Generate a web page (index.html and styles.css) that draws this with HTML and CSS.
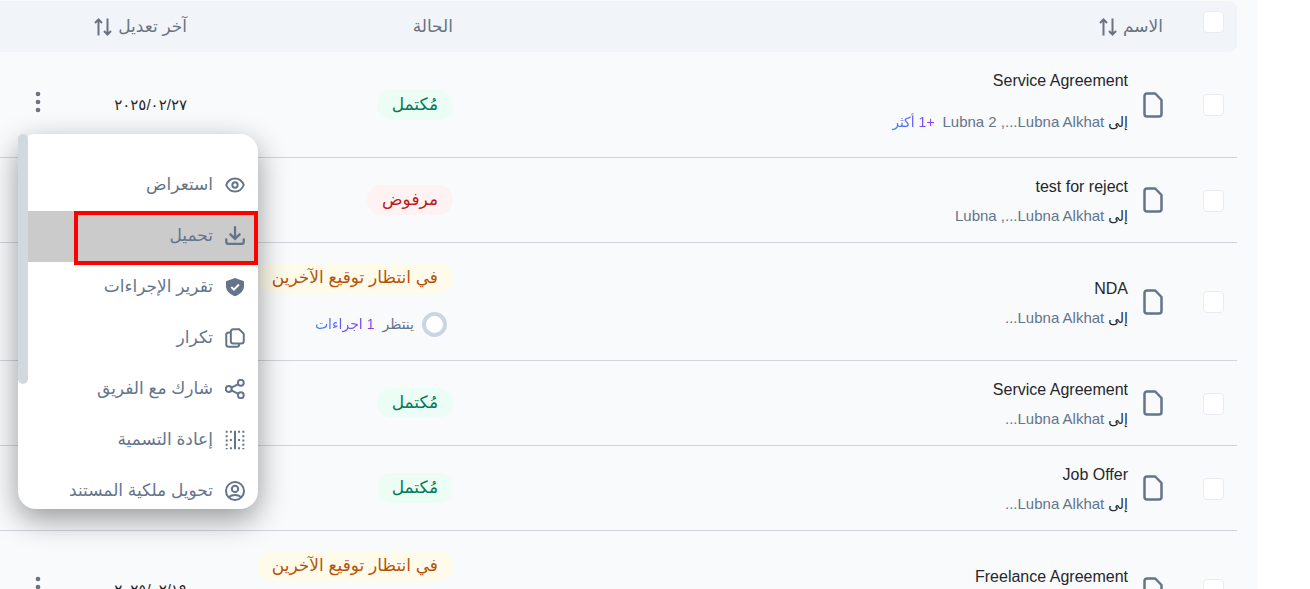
FILE: index.html
```html
<!DOCTYPE html>
<html lang="ar" dir="rtl">

<head>
    <meta charset="UTF-8">
    <meta name="viewport" content="width=device-width, initial-scale=1.0">
    <title>المستندات</title>
    <link rel="stylesheet" href="styles.css">
</head>

<body>
    <!-- shared icons -->
    <svg class="sprite" aria-hidden="true">
        <symbol id="doc" viewBox="0 0 20 26">
            <path d="M4 1.500h8.200L18.500 8v14a2.500 2.500 0 0 1-2.500 2.500H4A2.500 2.500 0 0 1 1.500 22V4A2.500 2.500 0 0 1 4 1.500z" fill="none" stroke="#64748b" stroke-width="2.500" stroke-linejoin="round" />
        </symbol>
        <symbol id="sort" viewBox="0 0 18 18">
            <path d="M4.500 17.500V1.500M1 5l3.500-3.500L8 5M13.500 .5v16M10 13l3.500 3.500L17 13" fill="none" stroke="#6b7280" stroke-width="2" />
        </symbol>
        <symbol id="dots" viewBox="0 0 24 24">
            <g fill="#6b7280">
                <circle cx="12" cy="4" r="2.300" />
                <circle cx="12" cy="12" r="2.300" />
                <circle cx="12" cy="20" r="2.300" />
            </g>
        </symbol>
    </svg>

    <div class="panel">
        <table class="table">
            <thead>
                <tr>
                    <th class="col-check"><input type="checkbox" class="check" aria-label="تحديد الكل"></th>
                    <th class="col-name"><button class="sort">الاسم <svg class="sort-icon"><use href="#sort" /></svg></button></th>
                    <th class="col-status">الحالة</th>
                    <th class="col-date"><button class="sort">آخر تعديل <svg class="sort-icon"><use href="#sort" /></svg></button></th>
                    <th class="col-more"></th>
                </tr>
            </thead>
            <tbody>
                <tr>
                    <td class="col-check"><input type="checkbox" class="check" aria-label="Service Agreement"></td>
                    <td>
                        <div class="file">
                            <svg class="doc-icon"><use href="#doc" /></svg>
                            <div class="info">
                                <p class="title"><bdi>Service Agreement</bdi></p>
                                <p class="to to-more">إلى <span class="who"><bdi>Lubna Alkhat</bdi>..., <bdi>Lubna 2</bdi></span> <button class="more">+1 أكثر</button></p>
                            </div>
                        </div>
                    </td>
                    <td><span class="pill done">مُكتمل</span></td>
                    <td class="date">٢٠٢٥/٠٢/٢٧</td>
                    <td class="col-more">
                        <div class="actions">
                            <button class="dots" aria-label="خيارات"><svg><use href="#dots" /></svg></button>
                            <div class="menu">
                                <ul class="menu-list">
                                    <li><button class="item"><svg viewBox="0 0 24 24"><path d="M1.500 12c2-5 6-7.800 10.500-7.800s8.500 2.800 10.500 7.800c-2 5-6 7.800-10.500 7.800s-8.500-2.800-10.500-7.800z" /><circle cx="12" cy="12" r="3.200" /></svg>استعراض</button></li>
                                    <li><button class="item active"><svg viewBox="0 0 24 24"><path d="M12 1.500V15M6.500 10l5.500 5.500L17.500 10M1.500 16v2.500A3 3 0 0 0 4.500 21.500h15a3 3 0 0 0 3-3V16" stroke-linecap="round" stroke-width="2.800" /></svg>تحميل</button><span class="mark"></span></li>
                                    <li><button class="item"><svg viewBox="0 0 24 24"><path d="M12 1.200l10.800 4v5.500c0 5.800-4.300 9.800-10.800 12.300C5.500 20.500 1.200 16.500 1.200 10.700V5.200z" fill="#64748b" stroke="none" /><path d="M7.500 12l3.200 3.200 6-6.200" stroke="#fff" /></svg>تقرير الإجراءات</button></li>
                                    <li><button class="item"><svg viewBox="0 0 24 24"><path d="M10 1.500h7l5.500 5.500v8.500a3 3 0 0 1-3 3H10a3 3 0 0 1-3-3v-11a3 3 0 0 1 3-3z" /><path d="M7 5.500H4.500a3 3 0 0 0-3 3v11a3 3 0 0 0 3 3H14a3 3 0 0 0 3-3v-1" /></svg>تكرار</button></li>
                                    <li><button class="item"><svg viewBox="0 0 24 24"><circle cx="19" cy="4.500" r="3.500" /><circle cx="19" cy="19.500" r="3.500" /><circle cx="4.500" cy="12" r="3.500" /><path d="M7.700 10.400L16 6.200M7.700 13.600L16 17.800" /></svg>شارك مع الفريق</button></li>
                                    <li><button class="item"><svg viewBox="0 0 24 24"><path d="M12 1v22" /><path d="M2 1v22M22 1v22" stroke-dasharray="2.400 2.750" /><path d="M5.900 2.200h2.400M5.900 12h2.400M5.900 21.800h2.400M15.700 2.200h2.400M15.700 12h2.400M15.700 21.800h2.400" /></svg>إعادة التسمية</button></li>
                                    <li><button class="item"><svg viewBox="0 0 24 24"><circle cx="12" cy="12" r="10.800" /><circle cx="12" cy="9.500" r="3.800" /><path d="M4.500 19.500c4-3.500 11-3.500 15 0" /></svg>تحويل ملكية المستند</button></li>
                                </ul>
                                <div class="scroll"><div class="thumb"></div></div>
                            </div>
                        </div>
                    </td>
                </tr>
                <tr>
                    <td class="col-check"><input type="checkbox" class="check" aria-label="test for reject"></td>
                    <td>
                        <div class="file">
                            <svg class="doc-icon"><use href="#doc" /></svg>
                            <div class="info">
                                <p class="title"><bdi>test for reject</bdi></p>
                                <p class="to">إلى <span class="who"><bdi>Lubna Alkhat</bdi>..., <bdi>Lubna</bdi></span></p>
                            </div>
                        </div>
                    </td>
                    <td><span class="pill rejected">مرفوض</span></td>
                    <td></td>
                    <td></td>
                </tr>
                <tr>
                    <td class="col-check"><input type="checkbox" class="check" aria-label="NDA"></td>
                    <td>
                        <div class="file">
                            <svg class="doc-icon"><use href="#doc" /></svg>
                            <div class="info">
                                <p class="title"><bdi>NDA</bdi></p>
                                <p class="to">إلى <span class="who"><bdi>Lubna Alkhat</bdi>...</span></p>
                            </div>
                        </div>
                    </td>
                    <td>
                        <div class="pending">
                            <span class="pill waiting">في انتظار توقيع الآخرين</span>
                            <p class="progress"><span class="ring"></span>ينتظر <a href="#" class="steps">1 اجراءات</a></p>
                        </div>
                    </td>
                    <td></td>
                    <td></td>
                </tr>
                <tr>
                    <td class="col-check"><input type="checkbox" class="check" aria-label="Service Agreement"></td>
                    <td>
                        <div class="file">
                            <svg class="doc-icon"><use href="#doc" /></svg>
                            <div class="info">
                                <p class="title"><bdi>Service Agreement</bdi></p>
                                <p class="to">إلى <span class="who"><bdi>Lubna Alkhat</bdi>...</span></p>
                            </div>
                        </div>
                    </td>
                    <td><span class="pill done">مُكتمل</span></td>
                    <td></td>
                    <td></td>
                </tr>
                <tr>
                    <td class="col-check"><input type="checkbox" class="check" aria-label="Job Offer"></td>
                    <td>
                        <div class="file">
                            <svg class="doc-icon"><use href="#doc" /></svg>
                            <div class="info">
                                <p class="title"><bdi>Job Offer</bdi></p>
                                <p class="to">إلى <span class="who"><bdi>Lubna Alkhat</bdi>...</span></p>
                            </div>
                        </div>
                    </td>
                    <td><span class="pill done">مُكتمل</span></td>
                    <td></td>
                    <td></td>
                </tr>
                <tr>
                    <td class="col-check"><input type="checkbox" class="check" aria-label="Freelance Agreement"></td>
                    <td>
                        <div class="file">
                            <svg class="doc-icon"><use href="#doc" /></svg>
                            <div class="info">
                                <p class="title"><bdi>Freelance Agreement</bdi></p>
                                <p class="to">إلى <span class="who"><bdi>Lubna Alkhat</bdi>...</span></p>
                            </div>
                        </div>
                    </td>
                    <td>
                        <div class="pending">
                            <span class="pill waiting">في انتظار توقيع الآخرين</span>
                            <p class="progress"><span class="ring"></span>ينتظر <a href="#" class="steps">1 اجراءات</a></p>
                        </div>
                    </td>
                    <td class="date">٢٠٢٥/٠٢/١٩</td>
                    <td class="col-more">
                        <div class="actions">
                            <button class="dots" aria-label="خيارات"><svg><use href="#dots" /></svg></button>
                        </div>
                    </td>
                </tr>
            </tbody>
        </table>
    </div>
</body>

</html>
```
FILE: styles.css
```css
* {
    margin: 0;
    padding: 0;
    box-sizing: border-box;
}

html {
    height: 100%;
    overflow: hidden;
}

body {
    height: 100%;
    overflow: hidden;
    background: #fff;
    font-family: "Liberation Sans", "DejaVu Sans", sans-serif;
    font-size: 17px;
    line-height: 24px;
    color: #27272a;
}

button {
    border: 0;
    background: none;
    font: inherit;
    color: inherit;
    cursor: pointer;
}

.sprite {
    display: none;
}

.panel {
    margin-right: 53px;
    padding: 1px 20px 0 0;
    background: #f8fafc;
}

/* table */
.table {
    width: 100%;
    table-layout: fixed;
    border-collapse: separate;
    border-spacing: 0;
    white-space: nowrap;
}

.table th {
    height: 51px;
    padding: 0 24px 0 0;
    background: #f1f5f9;
    font-weight: 400;
    text-align: right;
    color: #6b7280;
}

.table td {
    padding: 14px 24px 14px 0;
    border-bottom: 1px solid #d1d5db;
    vertical-align: middle;
}

.table .col-check {
    width: 50px;
    padding-right: 0;
    padding-left: 3px;
    text-align: center;
}

.table th:first-child {
    padding-top: 8px;
    border-radius: 0 8px 8px 0;
    vertical-align: top;
}

.table .col-status {
    width: 266px;
}

.table .col-date {
    width: 135px;
}

.table .col-more {
    width: 76px;
    padding-right: 0;
    padding-bottom: 20px;
}

.table .date {
    font-size: 15px;
}

.sort {
    display: flex;
    align-items: center;
    gap: 6px;
}

.sort-icon {
    width: 18px;
    height: 18px;
}

.check {
    appearance: none;
    width: 21px;
    height: 22px;
    border: 1px solid #e9ebf0;
    border-radius: 4px;
    background: #fff;
    vertical-align: middle;
}

/* name */
.file {
    display: flex;
    align-items: center;
    gap: 15px;
}

.doc-icon {
    width: 20px;
    height: 26px;
}

.info {
    padding-top: 3px;
}

.title {
    font-size: 16px;
}

.to {
    margin-top: 5px;
    font-size: 14px;
}

.to-more {
    padding: 12px 0 9px;
}

.who {
    font-size: 15px;
    color: #64748b;
}

.more {
    margin-right: 4px;
}

.more,
.steps {
    background: linear-gradient(to left, #9333ea, #3b82f6);
    background-clip: text;
    color: transparent;
    text-decoration: none;
}

/* status */
.pill {
    display: inline-block;
    padding: 0 15px;
    border-radius: 15px;
    line-height: 30px;
    vertical-align: middle;
}

.done {
    background: #ecfdf5;
    color: #047857;
}

.rejected {
    background: #fef2f2;
    color: #b91c1c;
}

.waiting {
    background: #fffbeb;
    color: #b45309;
}

.pending {
    display: flex;
    flex-direction: column;
    align-items: flex-start;
    gap: 16px;
    padding: 6px 0;
}

.progress {
    display: flex;
    align-items: center;
    gap: 8px;
    padding-right: 6px;
    font-size: 14px;
    line-height: 31px;
    color: #64748b;
}

.ring {
    width: 25px;
    height: 25px;
    border: 4px solid #cbd5e1;
    border-radius: 50%;
    background: #fff;
}

/* row actions */
.actions {
    position: relative;
    width: 24px;
    margin: 0 auto;
}

.dots {
    display: block;
}

.dots svg {
    display: block;
    width: 24px;
    height: 24px;
}

.menu {
    position: absolute;
    z-index: 10;
    top: 44px;
    left: -8px;
    display: flex;
    width: 240px;
    height: 375px;
    border-radius: 18px;
    background: #fff;
    box-shadow: 0 10px 30px rgba(0, 0, 0, .4);
}

.menu-list {
    flex: 1;
    padding-top: 26px;
    overflow: hidden;
    border-radius: 0 18px 18px 0;
    list-style: none;
}

.menu-list li {
    position: relative;
}

.item {
    display: flex;
    align-items: center;
    gap: 12px;
    width: 100%;
    height: 51px;
    padding: 0 13px;
    color: #64748b;
}

.item svg {
    flex: none;
    width: 20px;
    height: 20px;
    fill: none;
    stroke: #64748b;
    stroke-width: 2.4;
}

.active {
    background: #cbcbcb;
}

.mark {
    position: absolute;
    inset: 0 0 -3px 46px;
    z-index: 1;
    border: 4px solid #f00;
}

.scroll {
    width: 10px;
}

.thumb {
    height: 250px;
    border-radius: 5px;
    background: #d1d9dc;
}
```
